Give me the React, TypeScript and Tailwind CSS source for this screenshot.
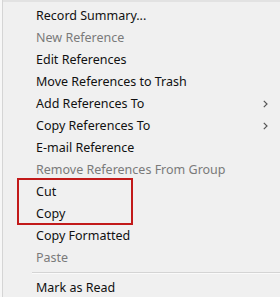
const items: { label: string; disabled?: boolean; sub?: boolean }[] = [
  { label: "Record Summary..." },
  { label: "New Reference", disabled: true },
  { label: "Edit References" },
  { label: "Move References to Trash" },
  { label: "Add References To", sub: true },
  { label: "Copy References To", sub: true },
  { label: "E-mail Reference" },
  { label: "Remove References From Group", disabled: true },
  { label: "Cut" },
  { label: "Copy" },
  { label: "Copy Formatted" },
  { label: "Paste", disabled: true },
];

const Row = ({ label, disabled, sub }: { label: string; disabled?: boolean; sub?: boolean }) => (
  <div className="flex h-[22px] items-center pl-[33px] pr-[10px]">
    <span className={disabled ? "flex-1 text-[#7a7a7a]" : "flex-1 text-[#111]"}>{label}</span>
    {sub && (
      <svg width="5" height="8" viewBox="0 0 5 8" className="mr-[2px]">
        <path d="M0.8 0.8 L4 4 L0.8 7.2" fill="none" stroke="#555" strokeWidth="1.2" />
      </svg>
    )}
  </div>
);

export default function App() {
  return (
    <div
      className="relative flex h-[297px] w-[280px] overflow-hidden bg-[#f0f0f0] text-[12.5px]"
      style={{ fontFamily: '"Noto Sans", "Open Sans", sans-serif' }}
    >
      <div className="w-[3px] border-r border-[#d5d5d5] bg-[#f7f7f7]" />
      <div className="flex-1 border-t-2 border-[#e2e2e2] pt-[3px]">
        {items.map((it) => (
          <Row key={it.label} {...it} />
        ))}
        <div className="ml-[29px] mt-[3px] mb-[3px] border-t border-b border-t-[#d4d4d4] border-b-[#fafafa]" />
        <Row label="Mark as Read" />
      </div>
      <div className="absolute left-[17px] top-[178px] h-[47px] w-[116px] border-2 border-[#c21a1a]" />
    </div>
  );
}
